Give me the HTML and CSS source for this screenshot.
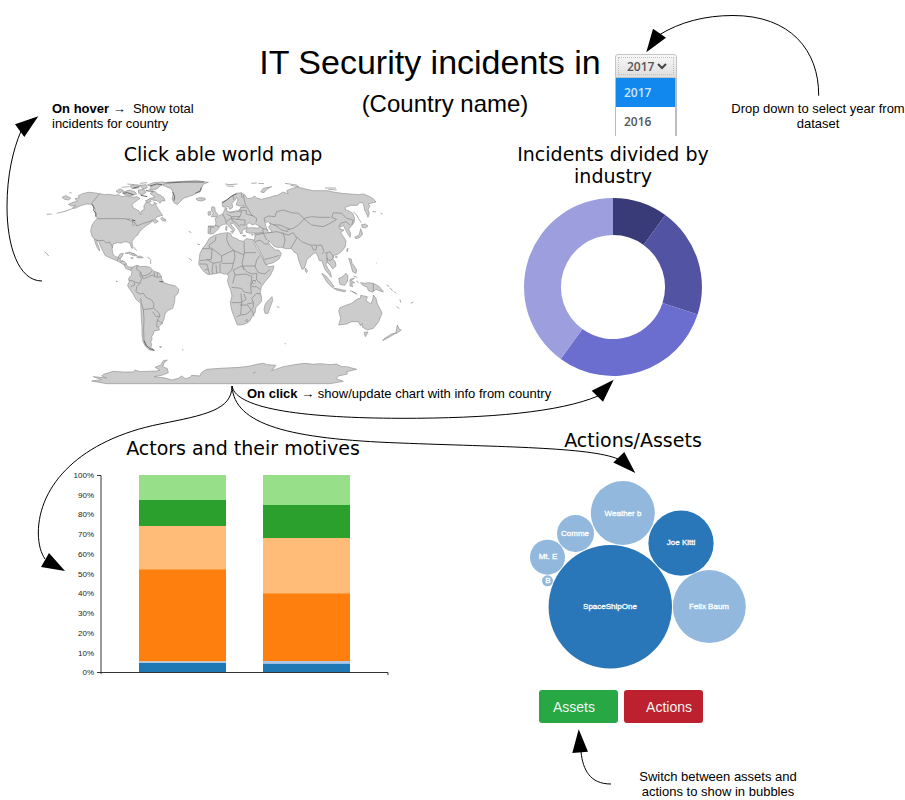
FILE: index.html
```html
<!DOCTYPE html>
<html lang="en">
<head>
<meta charset="utf-8">
<title>IT Security incidents</title>
<link rel="stylesheet" href="styles.css">
</head>
<body>
<main class="board">
  <header class="header">
    <p class="note note-hover"><b>On hover</b> → &nbsp;Show total<br>incidents for country</p>
    <div class="heading">
      <h1>IT Security incidents in</h1>
      <p class="country">(Country name)</p>
    </div>
    <div class="picker">
      <div class="picker-face">
        <select aria-label="Year"><option>2017</option><option>2016</option></select>
        <svg class="chevron" viewBox="0 0 10 8" aria-hidden="true"><path d="M1 2 5 6 9 2"/></svg>
      </div>
      <ul class="picker-list">
        <li class="selected">2017</li>
        <li>2016</li>
      </ul>
    </div>
    <p class="note note-year">Drop down to select year from dataset</p>
  </header>

  <section class="panel panel-map">
    <h2>Click able world map</h2>
    <svg class="figure map" viewBox="-120 0 1338 645" role="img" aria-label="World map">
      <g class="land">
        <path d="M92 100 85 103 95 108 108 106 98 113 105 115 125 106 140 102 152 103 160 108 165 118 166 132 172 146 165 152 156 165 152 183 156 198 163 208 167 222 172 233 179 243 177 233 172 220 170 211 176 214 183 232 190 245 195 256 213 265 228 271 240 277 252 285 258 296 268 299 272 301 280 292 268 291 262 289 258 281 254 275 242 273 240 267 246 260 250 250 240 252 234 262 225 260 218 250 216 235 220 222 232 218 245 219 252 215 262 216 270 220 274 232 277 236 277 225 276 214 284 202 294 194 300 183 310 174 320 166 330 160 338 153 345 160 355 154 345 148 352 140 368 136 360 125 352 113 345 100 336 106 325 96 318 97 312 107 312 120 303 124 302 134 296 122 280 114 276 104 284 96 292 91 300 85 290 80 280 82 262 78 245 80 235 74 222 76 208 73 195 74 179 71 160 68 145 67 128 71 115 77 118 83 105 86 112 92Z"/>
        <path d="M362 146 368 141 370 146 376 147 377 153 368 152ZM66 82 78 77 92 84 86 90 74 88ZM468 86 478 83 494 84 496 89 484 93 472 91Z"/>
        <path d="M368 38 395 36 430 34 470 32 505 37 490 42 487 50 482 55 480 66 470 68 462 74 445 80 432 84 420 95 412 104 402 98 396 86 400 70 394 56 378 50 370 46Z"/>
        <path d="M330 70 345 64 352 72 362 76 372 84 375 93 366 92 360 100 352 92 338 90 328 86 345 82ZM248 66 270 60 285 66 290 72 275 77 255 75ZM228 64 240 56 250 62 238 70ZM322 45 340 38 370 36 378 40 360 48 352 56 340 60 328 58 335 50ZM295 60 312 58 318 68 306 74 296 70ZM270 48 288 44 302 46 296 54 276 56ZM300 46 318 44 322 54 308 56ZM316 92 328 88 334 94 324 98Z"/>
        <path d="M256 250 268 246 284 252 292 257 280 257 266 250ZM290 261 300 258 310 263 296 264ZM272 263 280 264 276 266Z"/>
        <path d="M272 301 280 290 292 286 300 290 315 289 330 292 340 303 358 309 364 320 366 330 372 338 385 343 405 347 416 357 415 368 405 380 403 400 398 415 382 422 375 432 372 447 366 461 356 471 358 480 342 483 340 492 335 500 336 508 332 516 335 524 332 532 344 541 328 540 316 528 309 515 306 495 306 470 304 445 303 420 302 400 288 388 278 370 265 352 263 345 268 335 266 325 274 316 276 305Z"/>
        <path d="M358 530 365 530 362 533ZM228 333 232 334 230 336Z"/>
        <path d="M524 196 540 191 562 188 572 190 575 200 588 205 600 212 610 214 618 206 640 209 642 218 650 235 660 250 668 265 675 282 685 290 702 288 700 297 690 318 675 335 664 350 660 370 664 378 665 394 648 412 645 428 636 440 630 452 620 460 608 464 592 465 588 455 582 440 575 420 571 398 576 378 572 360 566 345 562 332 566 320 562 312 552 312 540 308 525 311 505 314 494 307 484 295 476 282 478 265 480 250 488 235 498 222 508 205Z"/>
        <path d="M696 380 698 392 690 412 684 430 675 430 672 418 676 402 684 392Z"/>
        <path d="M505 168 504 190 512 192 522 190 534 178 540 168 550 163 560 162 566 168 575 178 582 184 584 178 574 166 572 160 580 160 590 172 598 182 602 192 607 190 606 182 612 178 620 176 618 186 630 190 644 188 645 200 643 212 650 226 658 240 668 258 674 275 678 284 700 278 718 266 724 250 716 240 706 240 700 235 688 222 684 212 690 215 702 228 712 232 722 232 740 236 755 236 762 246 772 252 776 270 786 298 792 296 798 280 800 270 812 258 822 250 828 248 834 260 838 272 846 272 850 285 856 300 866 312 874 322 872 308 864 296 858 284 860 275 870 285 878 296 888 288 886 276 878 266 880 256 892 254 905 244 916 230 918 212 910 200 902 188 912 180 900 178 900 172 910 166 916 178 922 190 930 202 932 190 926 178 934 168 942 158 944 145 938 130 925 122 916 120 916 112 932 106 952 106 958 98 968 98 972 108 974 120 980 132 984 142 988 130 984 118 990 108 984 102 998 98 1008 96 1000 86 985 78 970 72 955 74 930 72 905 70 880 66 862 62 840 62 820 62 800 58 790 55 770 52 755 56 740 62 745 72 730 66 712 76 700 78 690 82 680 84 665 88 650 84 644 78 636 84 622 86 614 74 604 68 590 70 578 76 568 85 556 92 546 96 548 110 556 112 564 108 570 118 578 112 576 100 584 92 590 82 594 90 588 104 598 108 612 106 606 112 600 116 596 124 584 126 570 126 560 124 560 114 556 114 552 124 548 132 536 138 525 146 528 158 526 168Z"/>
        <path d="M516 110 524 112 526 124 534 134 530 140 514 140 520 130 514 120ZM504 126 512 124 513 134 505 136ZM558 168 561 170 560 182 557 180ZM572 184 580 184 578 190ZM608 196 618 197 610 199ZM634 194 640 192 637 196Z"/>
        <path d="M662 66 670 55 695 50 680 58 672 68ZM965 164 976 162 984 168 976 174 966 172ZM962 176 968 192 960 202 948 206 944 202 958 194ZM920 240 924 234 922 246ZM886 260 892 260 888 264ZM926 265 934 268 936 280 944 290 950 300 948 310 938 305 934 290ZM796 294 802 302 800 308 796 304Z"/>
        <path d="M845 310 858 318 872 335 882 350 876 352 862 338ZM896 325 905 322 918 310 924 318 922 335 914 346 900 343ZM880 354 900 358 918 362 914 366 890 360ZM930 328 944 324 934 332 944 338 935 340 938 350 930 348ZM962 338 975 340 985 338 1000 340 1018 350 1030 366 1018 362 1008 358 998 366 985 362 982 352 968 346Z"/>
        <path d="M896 465 902 445 896 422 900 413 920 405 935 400 950 388 962 384 962 376 982 380 978 392 992 402 998 390 1000 375 1008 385 1012 402 1022 420 1026 430 1016 455 1000 475 982 480 968 472 966 460 962 468 955 455 935 455 920 462ZM972 487 984 486 976 500ZM1072 465 1078 478 1084 480 1070 490 1068 486ZM1070 488 1050 500 1028 512 1032 506 1055 492Z"/>
        <path d="M155 633 185 629 160 620 200 624 185 618 190 613 220 604 250 606 280 606 285 600 300 605 350 603 360 600 345 592 362 585 370 572 382 570 372 580 368 590 382 596 385 608 365 616 342 620 375 624 395 630 415 625 425 618 436 626 450 622 455 616 480 618 484 608 500 598 540 595 560 594 600 592 630 588 655 582 670 580 682 584 708 586 695 602 730 590 770 583 795 580 820 583 840 581 870 584 890 582 905 590 920 590 950 598 920 605 922 612 895 618 888 626 910 634 870 641 200 641Z"/>
      </g>
      <g class="water">
        <path d="M620 164 628 158 636 164 646 162 658 168 655 175 635 173 622 174ZM675 160 685 154 692 163 686 172 696 186 686 188 680 176ZM262 148 272 146 282 151 274 154ZM278 156 282 156 281 168 277 166ZM638 332 646 333 644 340 638 339Z"/>
      </g>
      <g class="borders">
        <path d="M179 71 155 100 160 108M172 146H255L272 150 285 158 290 168 310 160 330 154 342 149M163 208 176 212 190 211 200 219 208 216 216 228 218 235M232 272 235 264 241 264M241 277 250 270M252 285 260 281"/>
        <path d="M266 330 282 334 284 345 272 350M284 336 300 340 305 325 300 318V306M300 340 290 350 288 365 300 372 310 370 318 382 335 390 342 402 340 415 318 418 310 418 304 400 302 385M342 415 356 428 360 438 348 440 338 425M310 418 312 445 311 480 312 510 320 528M352 450 368 461M352 450 350 470 356 472M360 438 352 450M292 286 290 298 302 306 306 318 318 316 330 310 336 302M342 305 344 320M352 308V320M306 318 310 326 322 322 336 315 350 322 365 320"/>
        <path d="M528 200 526 212 508 224V234M488 236H508L516 238 514 268 480 272M512 232 545 258 560 250 582 240M562 190 560 208 568 228 582 242 612 255M612 214 613 248H648M613 248 612 255 606 280 612 300M545 258V275L520 280 516 300M545 280 580 280 575 300 562 312M582 242 585 262 580 280M580 300 606 288 620 305 636 312 650 310M650 270 645 290 655 308 675 312 690 298M608 288H645M650 310V330L664 342M585 315 618 312 636 320 632 345 634 370 612 366 604 355 575 352M580 300 585 315 578 340M575 398H605L603 370M605 398 602 435 590 440M600 405 622 405 634 420 620 432 604 435M622 402 640 398V412L634 418M640 398 635 385 650 370 664 372M634 350 650 350 660 358M616 452 620 448 624 452 620 456ZM480 282H500L505 298M494 300 505 298 508 312M516 300 518 311M528 285 530 310M540 280 540 308M500 268 520 280M636 420 642 440M634 345 640 332 648 332M603 398 618 388 612 372M660 256 650 270"/>
        <path d="M672 145 685 138 705 140 710 125 730 120 755 128 775 130 792 145 815 140 840 142 870 142M792 147 815 165 850 170 870 160 890 148 875 142 880 128 905 130 920 145 940 150 935 165M792 147 775 165 760 175 740 180M688 160 705 165 725 180 745 185M700 165 720 165 750 178M672 145 675 157M670 190 688 188 710 185 730 190 735 210 730 232M725 190 745 195 760 188 770 205 758 225 752 235M770 200 785 215 810 225 832 226 845 225M815 228 820 240 828 240 830 228M845 225 852 245 845 252M855 250 870 245 882 262 870 272 858 265M645 195 670 190 680 210M645 215 660 210 675 222 688 222M674 268 700 262 718 256M645 190 670 188 668 175 658 168M668 175 685 180M610 75 615 100 620 110 635 135 650 145 648 157M570 128 590 122 605 125 600 140 575 140 560 132M590 148 615 150V165M600 140 590 148 572 145 560 155M548 132 556 148 560 160M575 140 576 152 590 160 600 172M600 165 615 165M600 112 618 112M598 120 620 122 618 132 640 138M505 170 522 172M512 172 510 190M526 166 538 170M578 76 582 90M604 70 606 84M896 172 902 160 918 155 930 165M1000 340V364M860 250 862 275"/>
      </g>
      <g class="islets">
        <path d="M50 130 75 124 102 114M20 133 35 132M88 68 95 69M14 246 20 250 26 258M245 52 268 50M262 42 284 44M300 40 322 38M340 96 352 102M555 42 570 44 592 42M560 48 582 49M634 40 650 39M655 40 672 41M735 40 770 45 778 52M752 46 774 50M855 54 888 54M865 58 890 60M940 125 950 135 958 150 964 158M930 362 950 370M936 364 952 374M1040 345 1048 350M1050 354 1058 362M1062 364 1068 370M1080 388 1082 398M1070 410 1078 416M1112 400 1120 396M710 410 718 412M734 520 738 522M446 184 454 188M472 222 480 224M446 264 456 272M280 230 290 242M322 262 330 266M332 268V282M278 250 284 252M426 538 430 540M998 124 1008 126M1022 130 1028 132M1010 278V280M640 610 646 606M940 318 952 322M950 332 956 340"/>
      </g>
      <g class="coasts">
        <path d="M157 104 162 114 161 122 168 130 167 140M318 62 340 64M330 48 350 42 366 44M302 76 322 80M380 39 430 36 492 36M398 66 404 80 402 92M466 70 482 62 484 52M248 70 262 68 280 74M280 54 296 50M548 98 560 90 572 80 590 71M312 512 318 526 330 536 342 541M358 334 370 336M276 150 286 152"/>
      </g>
    </svg>
  </section>

  <section class="panel panel-industry">
    <h2>Incidents divided by<br>industry</h2>
    <svg class="figure" viewBox="-167 -100 334 198" role="img" aria-label="Incidents by industry">
      <path fill="#393b79" d="M0-89A89 89 0 0 1 52.300-72L30.600-42.100A52 52 0 0 0 0-52Z"/>
      <path fill="#5254a3" d="M52.300-72A89 89 0 0 1 84.600 27.500L49.500 16.100A52 52 0 0 0 30.600-42.100Z"/>
      <path fill="#6b6ecf" d="M84.600 27.500A89 89 0 0 1-52.300 72L-30.600 42.100A52 52 0 0 0 49.500 16.100Z"/>
      <path fill="#9c9ede" d="M-52.300 72A89 89 0 0 1 0-89V-52A52 52 0 0 0-30.600 42.100Z"/>
    </svg>
  </section>

  <p class="note note-click"><b>On click</b> → show/update chart with info from country</p>

  <section class="panel panel-actors">
    <h2>Actors and their motives</h2>
    <svg class="figure" viewBox="0 459 446 230" role="img" aria-label="Actors and their motives">
      <g transform="translate(139 0)">
        <path fill="#98df8a" d="M0 475H87V500H0Z"/>
        <path fill="#2ca02c" d="M0 500H87V526H0Z"/>
        <path fill="#ffbb78" d="M0 526H87V569.300H0Z"/>
        <path fill="#ff7f0e" d="M0 569.300H87V661.400H0Z"/>
        <path fill="#aec7e8" d="M0 661.400H87V663H0Z"/>
        <path fill="#1f77b4" d="M0 663H87V672H0Z"/>
      </g>
      <g transform="translate(263 0)">
        <path fill="#98df8a" d="M0 475H87V505H0Z"/>
        <path fill="#2ca02c" d="M0 505H87V538H0Z"/>
        <path fill="#ffbb78" d="M0 538H87V593.300H0Z"/>
        <path fill="#ff7f0e" d="M0 593.300H87V661H0Z"/>
        <path fill="#aec7e8" d="M0 661H87V663.700H0Z"/>
        <path fill="#1f77b4" d="M0 663.700H87V672H0Z"/>
      </g>
      <path class="axis" d="M97 475.500H101V674M97 672.500H388V675"/>
      <g class="ticks">
        <text x="94" y="478">100%</text>
        <text x="94" y="498">90%</text>
        <text x="94" y="517">80%</text>
        <text x="94" y="537">70%</text>
        <text x="94" y="557">60%</text>
        <text x="94" y="577">50%</text>
        <text x="94" y="596">40%</text>
        <text x="94" y="616">30%</text>
        <text x="94" y="636">20%</text>
        <text x="94" y="656">10%</text>
        <text x="94" y="675">0%</text>
      </g>
    </svg>
  </section>

  <section class="panel panel-assets">
    <h2>Actions/Assets</h2>
    <svg class="figure" viewBox="446 451 334 232" role="img" aria-label="Actions and assets">
      <g class="bubble-dark">
        <circle cx="610.300" cy="606.800" r="61.700"/>
        <circle cx="681" cy="543.200" r="32.600"/>
      </g>
      <g class="bubble-light">
        <circle cx="709.300" cy="606.600" r="36.500"/>
        <circle cx="622.800" cy="513" r="32"/>
        <circle cx="575.500" cy="533.500" r="18.500"/>
        <circle cx="547.500" cy="557.200" r="17.500"/>
        <circle cx="547.500" cy="580.800" r="5.500"/>
      </g>
      <g class="bubble-text">
        <text x="610" y="609">SpaceShipOne</text>
        <text x="681" y="545">Joe Kitti</text>
        <text x="709" y="609">Felix Baum</text>
        <text x="623" y="516">Weather b</text>
        <text x="575" y="536">Comme</text>
        <text x="548" y="559">Mt. E</text>
        <text x="548" y="583">B</text>
      </g>
    </svg>
    <div class="buttons">
      <button class="btn btn-assets" type="button">Assets</button>
      <button class="btn btn-actions" type="button">Actions</button>
    </div>
  </section>

  <p class="note note-switch">Switch between assets and<br>actions to show in bubbles</p>

  <svg class="arrows" viewBox="0 0 905 799" preserveAspectRatio="none" aria-hidden="true">
    <g class="lines">
      <path d="M42 281C18 281 7 245 7 207 7 175 13 150 21 131"/>
      <path d="M818.700 95.700C819 50 790 15.500 733 15.500 705 15.500 680 22 659 35"/>
      <path d="M232 386C236 410 310 418 400 418.300 490 418.500 560 412 598 396"/>
      <path d="M232 386C234 425 290 439 400 443 500 447 590 447 618 459"/>
      <path d="M232 386C232 410 205 415 160 424 80 440 38.500 485 38.300 533 38.500 545 41 553 45 559"/>
      <path d="M611 784C590 784 583 770 581 752"/>
    </g>
    <path d="M38.300 116.300 15 124.300 24.300 137ZM646.300 52.300 653 28.700 666 37.700ZM613.700 379.700 591.700 390.700 603 401.700ZM635.300 473 624.300 452 613.300 462.600ZM65 571 49 553 41 567ZM578.700 729.300 572.300 753 588 751.700Z"/>
  </svg>
</main>
</body>
</html>
```
FILE: styles.css
```css
* {
  box-sizing: border-box;
}

body {
  margin: 0;
  background: #fff;
  color: #000;
  font-family: "Liberation Sans", Arial, sans-serif;
}

h1, h2, p, ul {
  margin: 0;
  padding: 0;
  font-weight: 400;
}

.board {
  position: relative;
  display: grid;
  grid-template-columns: 446fr 334fr 125fr;
}

.header {
  grid-column: 1 / -1;
  display: grid;
  grid-template-columns: 245fr 370fr 62px 228fr;
  align-items: start;
}

.note {
  font-size: 13px;
  line-height: 15px;
}

.note-hover {
  padding: 101px 0 0 52px;
}

.heading {
  padding-top: 42px;
  text-align: center;
  white-space: nowrap;
}

h1 {
  font-size: 34px;
  line-height: 40px;
}

.country {
  margin-top: 8px;
  padding-left: 30px;
  font-size: 24px;
  line-height: 28px;
}

.picker {
  margin-top: 54px;
  font-family: "Open Sans", sans-serif;
  font-size: 12px;
  font-weight: 600;
  color: #555;
}

.picker-face {
  position: relative;
  height: 24px;
  padding: 2px;
  border: 1px solid #c4c4c4;
  border-radius: 3px 3px 0 0;
  background: linear-gradient(#f8f8f8, #dedede);
}

.picker-face select {
  display: block;
  width: 100%;
  height: 100%;
  padding: 0 0 0 8px;
  border: 1px dotted #c0c0c0;
  background: transparent;
  appearance: none;
  font: inherit;
  color: inherit;
}

.chevron {
  position: absolute;
  top: 7px;
  right: 9px;
  width: 10px;
  height: 8px;
  fill: none;
  stroke: #444;
  stroke-width: 2;
}

.picker-list {
  border: solid #bbb;
  border-width: 0 2px 0 1px;
  list-style: none;
}

.picker-list li {
  padding-left: 8px;
  font-weight: 600;
  line-height: 29px;
}

.picker-list .selected {
  background: #1088ee;
  color: #cfe6fb;
}

.note-year {
  padding: 101px 0 0 54px;
  text-align: center;
}

.panel h2 {
  font-family: "DejaVu Sans", sans-serif;
  font-size: 19px;
  line-height: 22px;
  text-align: center;
}

.figure {
  display: block;
  width: 100%;
}

.panel-map,
.panel-industry {
  padding-top: 7px;
}

.panel-map {
  grid-column: 1;
}

.map {
  margin-top: 5px;
}

.land path {
  fill: #ccc;
  stroke: #929292;
  stroke-width: 2;
}

.water path {
  fill: #fff;
  stroke: #929292;
  stroke-width: 2;
}

.borders path,
.islets path {
  fill: none;
  stroke: #858585;
  stroke-width: 2;
}

.coasts path {
  fill: none;
  stroke: #666;
  stroke-width: 3;
}

.note-click {
  grid-column: 1 / -1;
  padding: 1px 0 0 247px;
}

.panel-actors {
  grid-column: 1;
  padding-top: 36px;
}

.panel-actors h2,
.panel-assets h2 {
  padding-left: 40px;
}

.axis {
  fill: none;
  stroke: #333;
}

.ticks text {
  fill: #222;
  font-size: 8px;
  text-anchor: end;
}

.panel-assets {
  padding-top: 28px;
}

.bubble-dark {
  fill: #2976b9;
}

.bubble-light {
  fill: #92b9dd;
}

.bubble-text text {
  fill: #fff;
  stroke: #fff;
  stroke-width: .3;
  font-size: 8px;
  text-anchor: middle;
}

.buttons {
  display: flex;
  justify-content: center;
  gap: 6px;
  padding: 7px 0 0 16px;
}

.btn {
  width: 79px;
  height: 33px;
  border: 0;
  border-radius: 3px;
  font: 14px "Liberation Sans", Arial, sans-serif;
  color: #eef6ef;
}

.btn-assets {
  padding: 0 0 0 14px;
  background: #28a745;
  text-align: left;
}

.btn-actions {
  padding: 0 11px 0 0;
  background: #bd2130;
  text-align: right;
}

.note-switch {
  grid-column: 2 / 4;
  padding: 46px 0 0 85px;
  text-align: center;
}

.arrows {
  position: absolute;
  inset: 0;
  width: 100%;
  height: 100%;
  pointer-events: none;
}

.lines path {
  fill: none;
  stroke: #000;
  vector-effect: non-scaling-stroke;
}
```
